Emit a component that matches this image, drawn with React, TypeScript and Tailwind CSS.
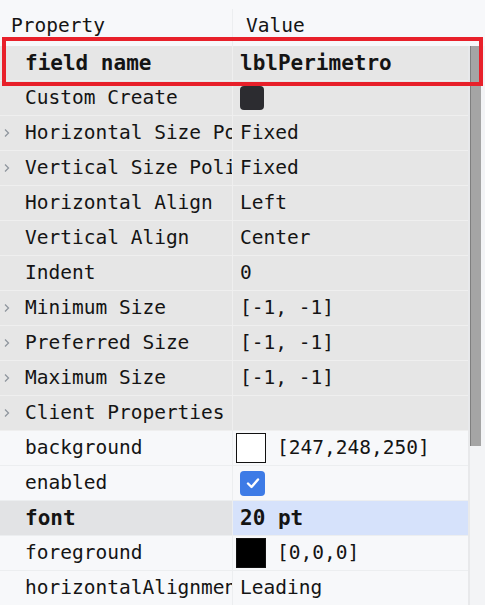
import type { ReactNode } from 'react';

type Row = {
  name: string;
  value?: ReactNode;
  expandable?: boolean;
  bold?: boolean;
  group: 'widget' | 'swing' | 'selected';
};

// Small grey chevron used for expandable property groups
function Chevron() {
  return (
    <svg width="8" height="10" viewBox="0 0 8 10" className="shrink-0">
      <polyline points="2,1.5 5.5,5 2,8.5" fill="none" stroke="#8f969e" strokeWidth="1.3" />
    </svg>
  );
}

function ColorValue({ fill, label }: { fill: string; label: string }) {
  return (
    <div className="flex items-center gap-[11px] -ml-[4px]">
      <div className={`w-[30px] h-[30px] border border-[#111] ${fill}`} />
      <span>{label}</span>
    </div>
  );
}

function CheckBox() {
  return (
    <div className="w-[25px] h-[25px] rounded-[4px] bg-[#3d7be6] flex items-center justify-center">
      <svg width="16" height="16" viewBox="0 0 16 16">
        <polyline points="3,8.5 6.5,12 13,4.5" fill="none" stroke="#fff" strokeWidth="2.4" strokeLinecap="round" strokeLinejoin="round" />
      </svg>
    </div>
  );
}

const rows: Row[] = [
  { name: 'field name', value: 'lblPerimetro', bold: true, group: 'widget' },
  {
    name: 'Custom Create',
    value: <div className="w-[24px] h-[24px] rounded-[4px] bg-[#2c2c30]" />,
    group: 'widget',
  },
  { name: 'Horizontal Size Policy', value: 'Fixed', expandable: true, group: 'widget' },
  { name: 'Vertical Size Policy', value: 'Fixed', expandable: true, group: 'widget' },
  { name: 'Horizontal Align', value: 'Left', group: 'widget' },
  { name: 'Vertical Align', value: 'Center', group: 'widget' },
  { name: 'Indent', value: '0', group: 'widget' },
  { name: 'Minimum Size', value: '[-1, -1]', expandable: true, group: 'widget' },
  { name: 'Preferred Size', value: '[-1, -1]', expandable: true, group: 'widget' },
  { name: 'Maximum Size', value: '[-1, -1]', expandable: true, group: 'widget' },
  { name: 'Client Properties', expandable: true, group: 'widget' },
  { name: 'background', value: <ColorValue fill="bg-white" label="[247,248,250]" />, group: 'swing' },
  { name: 'enabled', value: <CheckBox />, group: 'swing' },
  { name: 'font', value: '20 pt', bold: true, group: 'selected' },
  { name: 'foreground', value: <ColorValue fill="bg-black" label="[0,0,0]" />, group: 'swing' },
  { name: 'horizontalAlignment', value: 'Leading', group: 'swing' },
];

export default function App() {
  return (
    <div
      className="relative w-[485px] h-[605px] overflow-hidden bg-[#f7f8fa] text-[#141414] flex"
      style={{ fontFamily: '"DejaVu Sans Mono", "Liberation Mono", monospace' }}
    >
      <div className="w-[468px] flex flex-col text-[19.5px] leading-none">
        {/* header */}
        <div className="h-[46px] shrink-0 flex">
          <div className="w-[233px] flex items-center pl-[11px] pt-[6px] border-r border-[#eceef0] mt-[9px] pb-[9px]">
            Property
          </div>
          <div className="flex-1 flex items-center pl-[13px] pt-[6px] mt-[9px] pb-[9px]">Value</div>
        </div>

        {rows.map((r) => {
          const propBg =
            r.group === 'widget' ? 'bg-[#e6e6e6]' : r.group === 'selected' ? 'bg-[#e2e3e5]' : 'bg-[#f7f8fa]';
          const valBg =
            r.group === 'widget' ? 'bg-[#e6e6e6]' : r.group === 'selected' ? 'bg-[#d6e2fb]' : 'bg-[#f7f8fa]';
          const line = r.group === 'widget' ? 'border-[#efefef]' : 'border-[#eceef0]';
          return (
            <div
              key={r.name}
              className={`h-[35px] shrink-0 flex border-b ${line} ${r.bold ? 'font-bold text-[21px]' : ''}`}
            >
              <div className={`w-[233px] shrink-0 flex items-center border-r ${line} ${propBg} overflow-hidden`}>
                <div className="w-[25px] shrink-0 flex justify-start pl-[3px]">{r.expandable && <Chevron />}</div>
                <span className="whitespace-nowrap">{r.name}</span>
              </div>
              <div className={`flex-1 flex items-center pl-[7px] ${valBg} whitespace-nowrap`}>{r.value}</div>
            </div>
          );
        })}
      </div>

      {/* vertical scrollbar */}
      <div className="w-[17px] flex flex-col">
        <div className="h-[46px] shrink-0" />
        <div className="flex-1 bg-[#f3f4f6] border-l-2 border-[#e8e9eb] flex flex-col">
          <div className="h-[400px] w-[11px] bg-[#a5a5a5] border-l border-[#7f7f7f]" />
        </div>
      </div>

      {/* red annotation frame around the selected field */}
      <div className="absolute left-[2px] top-[37px] w-[481px] h-[49px] border-4 border-[#e8202a] pointer-events-none" />
    </div>
  );
}
